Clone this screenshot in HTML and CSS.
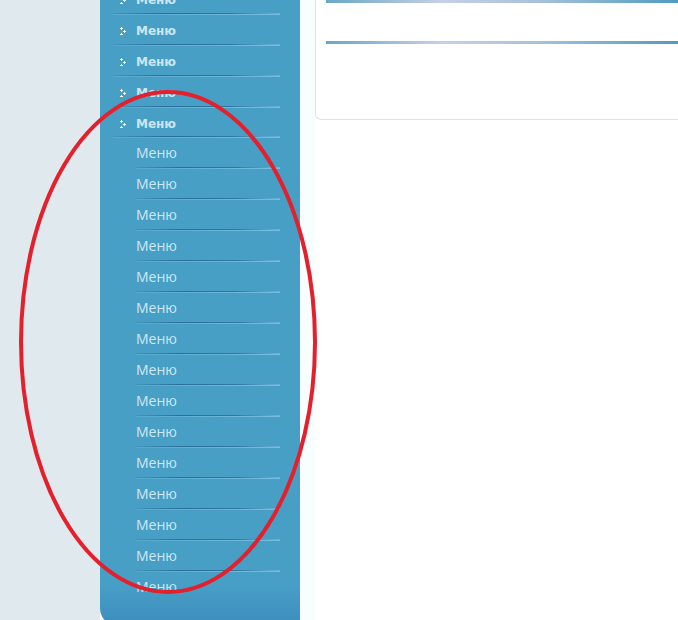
FILE: index.html
```html
<!DOCTYPE html>
<html lang="ru">
<head>
  <meta charset="UTF-8" />
  <title>Меню</title>
  <link rel="stylesheet" href="styles.css">
</head>
<body>
  <div class="page">
    <div class="gutter"></div>

    <aside class="sidebar">
      <ul class="menu">
        <li class="menu-item parent"><span class="dots"></span>Меню</li>
        <li class="menu-item parent"><span class="dots"></span>Меню</li>
        <li class="menu-item parent"><span class="dots"></span>Меню</li>
        <li class="menu-item parent"><span class="dots"></span>Меню</li>
        <li class="menu-item parent short"><span class="dots"></span>Меню</li>
        <li class="menu-item">Меню</li>
        <li class="menu-item">Меню</li>
        <li class="menu-item">Меню</li>
        <li class="menu-item">Меню</li>
        <li class="menu-item">Меню</li>
        <li class="menu-item">Меню</li>
        <li class="menu-item">Меню</li>
        <li class="menu-item">Меню</li>
        <li class="menu-item">Меню</li>
        <li class="menu-item">Меню</li>
        <li class="menu-item">Меню</li>
        <li class="menu-item">Меню</li>
        <li class="menu-item">Меню</li>
        <li class="menu-item">Меню</li>
        <li class="menu-item last">Меню</li>
      </ul>
    </aside>

    <main class="main">
      <div class="strip"></div>
      <div class="content">
        <div class="card">
          <div class="rule"></div>
          <div class="card-body"></div>
          <div class="rule"></div>
        </div>
      </div>
    </main>
  </div>

  <svg class="mark" width="678" height="620" viewBox="0 0 678 620">
    <ellipse cx="168" cy="342" rx="147" ry="250" fill="none" stroke="#e3202b" stroke-width="4"/>
  </svg>
</body>
</html>
```

FILE: styles.css
```css
body {
  margin: 0;
  font-family: "Open Sans", "DejaVu Sans", sans-serif;
  background-color: #ffffff;
  overflow: hidden;
}

.page {
  display: flex;
  height: 620px;
}

.gutter {
  width: 100px;
  flex-shrink: 0;
  background-color: #dfe9ee;
}

.sidebar {
  width: 200px;
  height: 626px;
  flex-shrink: 0;
  overflow: hidden;
  background: linear-gradient(to bottom, #479fc6 0, #479fc6 585px, #3d8cbd 626px);
  border-bottom-left-radius: 18px;
}

.menu {
  list-style: none;
  margin: -16px 0 0 0;
  padding: 0;
}

.menu-item {
  position: relative;
  height: 31px;
  line-height: 29px;
  padding-left: 36px;
  font-size: 14px;
  color: #cfe7f4;
  background: linear-gradient(to right, rgba(30, 90, 130, 0.15), #2b6f99 30%, #2f78a3 70%, #6db3d8) 36px 29px / 144px 1px no-repeat,
              linear-gradient(to right, rgba(120, 190, 225, 0.3), #78bde0) 36px 30px / 144px 1px no-repeat;
}

.menu-item.parent {
  line-height: 32px;
  font-family: "DejaVu Sans", sans-serif;
  font-weight: bold;
  font-size: 12px;
  color: #cde5f3;
  background-position: 13px 29px, 13px 30px;
  background-size: 167px 1px, 167px 1px;
}

.menu-item.short {
  height: 30px;
  background-position: 13px 28px, 13px 29px;
}

.menu-item.last {
  background: none;
}

.dots {
  position: absolute;
  left: 20px;
  top: 12px;
  width: 6px;
  height: 8px;
  background:
    radial-gradient(circle, #ffffff 55%, transparent 60%) 0 0 / 3px 3px no-repeat,
    radial-gradient(circle, #ffffff 55%, transparent 60%) 3px 3px / 3px 3px no-repeat,
    radial-gradient(circle, #ffffff 55%, transparent 60%) 0 6px / 3px 3px no-repeat;
}

.main {
  flex: 1;
  display: flex;
}

.strip {
  width: 15px;
  flex-shrink: 0;
  background-color: #f8fefe;
}

.content {
  flex: 1;
}

.card {
  height: 120px;
  box-sizing: border-box;
  padding-left: 10px;
  border-left: 1px solid #e0e3e3;
  border-bottom: 1px solid #e0e3e3;
  border-bottom-left-radius: 6px;
}

.rule {
  height: 3px;
  background: linear-gradient(to right, #6aa6c6, #c6d0e6 33%, #a8c2da 60%, #4f9cc0);
}

.card-body {
  height: 38px;
}

.mark {
  position: absolute;
  left: 0;
  top: 0;
  pointer-events: none;
}
```
